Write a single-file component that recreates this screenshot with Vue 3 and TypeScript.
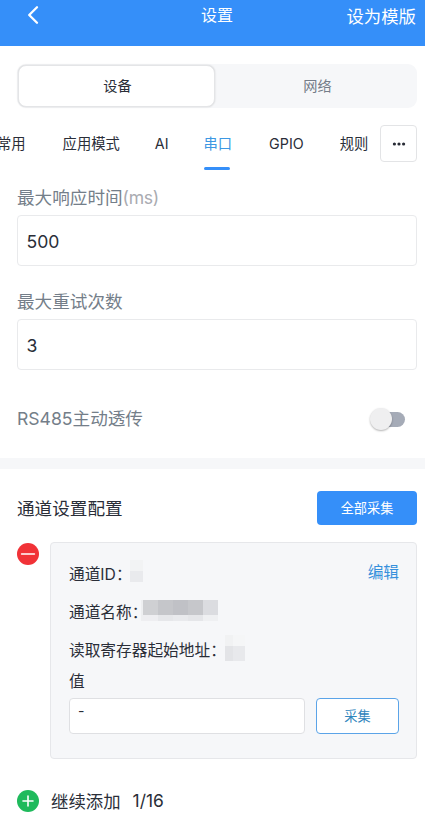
<script setup lang="ts">
import { ref } from 'vue'

interface Cell { x: number; y: number; w: number; h: number; c: string }
interface Row { label: string; kind: string; w: number; h: number; cells: Cell[] }

const segments: string[] = ['设备', '网络']
const segment = ref<string>('设备')
const tabs: string[] = ['常用', '应用模式', 'AI', '串口', 'GPIO', '规则']
const tab = ref<string>('串口')
const maxResponse = ref<string>('500')
const maxRetry = ref<string>('3')
const passthrough = ref<boolean>(false)
const value = ref<string>('-')

const rows: Row[] = [
  {
    label: '通道ID', kind: 'id', w: 13, h: 22,
    cells: [
      { x: 0, y: 0, w: 13, h: 11, c: '#f2f3f4' },
      { x: 0, y: 11, w: 13, h: 11, c: '#e9eaed' },
    ],
  },
  {
    label: '通道名称', kind: 'name', w: 77, h: 21,
    cells: [
      { x: 0, y: 0, w: 2, h: 21, c: '#eeeff1' },
      { x: 2, y: 0, w: 15, h: 15, c: '#cfd0d3' },
      { x: 17, y: 0, w: 15, h: 15, c: '#c5c6ca' },
      { x: 32, y: 0, w: 15, h: 15, c: '#c0c1c6' },
      { x: 47, y: 0, w: 15, h: 15, c: '#c6c7cb' },
      { x: 62, y: 0, w: 15, h: 15, c: '#dbdce0' },
      { x: 2, y: 15, w: 15, h: 6, c: '#eeeef1' },
      { x: 17, y: 15, w: 15, h: 6, c: '#e6e7ea' },
      { x: 32, y: 15, w: 15, h: 6, c: '#e9eaed' },
      { x: 47, y: 15, w: 15, h: 6, c: '#e5e6e9' },
      { x: 62, y: 15, w: 15, h: 6, c: '#eff0f2' },
    ],
  },
  {
    label: '读取寄存器起始地址', kind: 'addr', w: 20, h: 26,
    cells: [
      { x: 0, y: 0, w: 8, h: 11, c: '#f1f2f3' },
      { x: 8, y: 0, w: 12, h: 11, c: '#f5f6f7' },
      { x: 0, y: 11, w: 8, h: 15, c: '#e3e4e7' },
      { x: 8, y: 11, w: 12, h: 15, c: '#e8e9ec' },
    ],
  },
]
</script>

<template>
  <div class="page">
    <header class="header">
      <svg class="back" width="12" height="20" viewBox="0 0 12 20">
        <path d="M10 2.2 2.2 10 10 17.8" fill="none" stroke="#fff" stroke-width="2.3" stroke-linecap="round" stroke-linejoin="round" />
      </svg>
      <h1 class="title">设置</h1>
      <span class="template">设为模版</span>
    </header>

    <div class="segment">
      <button v-for="s in segments" :key="s" class="seg" :class="{ on: s === segment }" @click="segment = s">{{ s }}</button>
    </div>

    <div class="tabbar">
      <nav class="tabs">
        <span v-for="t in tabs" :key="t" class="tab" :class="{ active: t === tab }" @click="tab = t">{{ t }}</span>
      </nav>
      <button class="more">
        <svg width="14" height="4" viewBox="0 0 14 4" fill="#272b35">
          <circle cx="2.4" cy="2" r="1.6" /><circle cx="7" cy="2" r="1.6" /><circle cx="11.6" cy="2" r="1.6" />
        </svg>
      </button>
    </div>

    <section class="form">
      <label class="label">最大响应时间<span class="unit">(ms)</span></label>
      <input v-model="maxResponse" class="input" />
      <label class="label second">最大重试次数</label>
      <input v-model="maxRetry" class="input" />
      <div class="switch-row">
        <span class="switch-text">RS485主动透传</span>
        <span class="switch" :class="{ checked: passthrough }" @click="passthrough = !passthrough"><i class="thumb"></i></span>
      </div>
    </section>

    <div class="divider"></div>

    <section class="channels">
      <div class="channels-head">
        <h2>通道设置配置</h2>
        <button class="collect-all">全部采集</button>
      </div>
      <div class="channel">
        <svg class="round" width="22" height="22" viewBox="0 0 22 22">
          <circle cx="11" cy="11" r="11" fill="#f13237" />
          <path d="M4.6 11h12.8" stroke="#fff" stroke-width="1.6" stroke-linecap="round" />
        </svg>
        <div class="card">
          <div v-for="(r, i) in rows" :key="r.kind" class="row">
            <span class="name-text">{{ r.label }}<span class="colon">：</span></span>
            <svg class="mask" :class="r.kind" :width="r.w" :height="r.h" shape-rendering="crispEdges">
              <rect v-for="(c, n) in r.cells" :key="n" :x="c.x" :y="c.y" :width="c.w" :height="c.h" :fill="c.c" />
            </svg>
            <a v-if="i === 0" class="edit">编辑</a>
          </div>
          <div class="value-label">值</div>
          <div class="value-row">
            <textarea v-model="value" class="value"></textarea>
            <button class="collect">采集</button>
          </div>
        </div>
      </div>
      <div class="add">
        <svg class="round" width="22" height="22" viewBox="0 0 22 22">
          <circle cx="11" cy="11" r="11" fill="#1fba5c" />
          <path d="M6 11h10M11 6v10" stroke="#fff" stroke-width="1.6" stroke-linecap="round" />
        </svg>
        <span>继续添加</span><span class="count">1/16</span>
      </div>
    </section>
  </div>
</template>

<style>
body { background: #fff; overflow: hidden; }
</style>

<style scoped>
.page, .page * { box-sizing: border-box; }
.page {
  height: 827px;
  overflow: hidden;
  background: #fff;
  color: #2a2e38;
  font-family: Inter, "Noto Sans CJK SC", sans-serif;
}
button, input, textarea { font-family: inherit; color: inherit; margin: 0; outline: none; }
button { padding: 0; border: 0; background: none; }
h1, h2 { margin: 0; font-weight: 400; }

.header {
  display: grid;
  grid-template-columns: 1fr auto 1fr;
  height: 46px;
  padding: 0 9px 0 27px;
  background: #358ff9;
  color: #fff;
}
.back { margin-top: 5px; }
.title { font-size: 16px; line-height: 30px; padding-right: 9px; }
.template { font-size: 17.4px; line-height: 33px; text-align: right; }

.segment {
  display: flex;
  height: 44px;
  margin: 18px 8px 0 17px;
  border-radius: 9px;
  background: #f6f7f9;
}
.seg { flex: 1; font-size: 14.2px; color: #757d89; padding: 0 0 2px 3px; }
.seg.on {
  flex: none;
  width: 197px;
  background: #fff;
  color: #2a2e38;
  margin: 1px 0 1px 1px;
  padding-left: 2px;
  border: 1px solid #e4e5e7;
  border-radius: 8px;
  box-shadow: 0 0 2px rgba(0, 0, 0, .16);
}

.tabbar { display: flex; margin-top: 17px; padding-right: 8px; height: 46px; }
.tabs { display: flex; flex: 1; gap: 36px; margin-left: -3px; min-width: 0; white-space: nowrap; }
.tab { position: relative; font-size: 14.3px; line-height: 38px; height: 45px; }
.tab:nth-child(2) { margin: 0 -1px 0 1px; }
.tab.active { color: #3d98e3; margin: 0 1px 0 -1px; }
.tab.active::after {
  content: "";
  position: absolute;
  left: 0;
  right: 2px;
  bottom: 0;
  height: 3px;
  border-radius: 2px;
  background: #358ff9;
}
.more {
  display: flex;
  align-items: center;
  justify-content: center;
  width: 37px;
  height: 37px;
  border: 1px solid #e3e4e6;
  border-radius: 4px;
  background: #fff;
}

.form { display: flex; flex-direction: column; padding: 14px 8px 0 17px; height: 287px; }
.label { font-size: 17.6px; line-height: 25px; height: 30px; color: #747e89; }
.label.second { margin-top: 23px; }
.unit { color: #a9abb1; letter-spacing: -.3px; }
.input {
  width: 100%;
  height: 51px;
  padding: 1px 8.5px 0;
  border: 1px solid #e9eaec;
  border-radius: 4px;
  background: #fff;
  font-size: 17.6px;
}
.switch-row {
  display: flex;
  align-items: center;
  justify-content: space-between;
  height: 30px;
  margin-top: 34px;
  padding-right: 12px;
  font-size: 17.6px;
  color: #747e89;
}
.switch-text { padding-bottom: 4px; }
.switch { display: flex; align-items: center; width: 34px; height: 15px; border-radius: 8px; background: #a5abb7; }
.switch.checked { justify-content: flex-end; background: #358ff9; }
.thumb { width: 22px; height: 22px; margin-left: -1px; border-radius: 50%; background: #efeff0; box-shadow: 0 1px 2px rgba(0, 0, 0, .3); }

.divider { height: 11px; background: #f6f7f9; }

.channels { padding: 22px 8px 0 17px; }
.channels-head { display: flex; align-items: center; justify-content: space-between; height: 34px; }
.channels-head h2 { font-size: 17.6px; padding-bottom: 2px; }
.collect-all { width: 100px; height: 34px; padding-bottom: 1px; border-radius: 4px; background: #358ff9; color: #fff; font-size: 13.2px; }
.channel { display: flex; gap: 11px; margin-top: 17px; }
.round { flex: none; }
.card {
  flex: 1;
  height: 217px;
  padding: 12px 17px 0 18px;
  border: 1px solid #e6e7ea;
  border-radius: 4px;
  background: #f6f7f9;
  font-size: 15.7px;
}
.row { display: flex; align-items: center; height: 38px; white-space: nowrap; }
.name-text { padding-bottom: 1px; }
.colon { display: inline-block; }
.mask { flex: none; }
.mask.id { margin: -6px 0 0 -2px; }
.mask.name { margin: -3px 0 0 -6px; }
.mask.addr { margin: -5px 0 0 -1px; }
.edit { margin: -5px 0 0 auto; color: #3690dc; }
.value-label { height: 29px; line-height: 25px; }
.value-row { display: flex; gap: 11px; }
.value {
  flex: 1;
  min-width: 0;
  height: 36px;
  padding: 3px 8px;
  border: 1px solid #dfe0e3;
  border-radius: 4px;
  background: #fff;
  font-size: 14px;
  line-height: 18px;
  resize: none;
  overflow: hidden;
}
.collect { width: 83px; height: 36px; padding-bottom: 2px; border: 1px solid #5ba4e8; border-radius: 4px; background: #fff; color: #2f86bd; font-size: 13.2px; }
.channel .round { margin-top: 1px; }
.add { display: flex; align-items: center; height: 30px; margin-top: 27px; font-size: 17.4px; }
.add span { margin-left: 12px; padding-bottom: 2px; }
</style>
